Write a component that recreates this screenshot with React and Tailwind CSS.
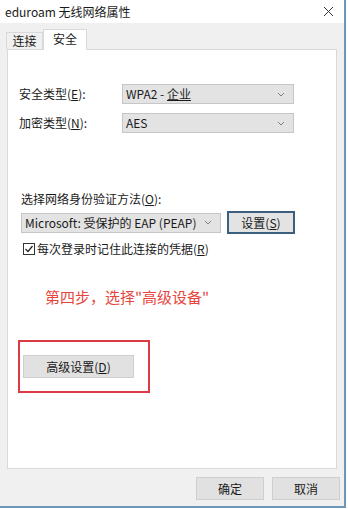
import React from "react";

const font = { fontFamily: '"Microsoft YaHei", "Noto Sans CJK SC", "Noto Sans", sans-serif' };

function Chevron() {
    return (
        <svg width="8" height="5" viewBox="0 0 8 5" className="text-[#808080]">
            <path d="M1 1 L4 4 L7 1" fill="none" stroke="currentColor" strokeWidth="1" />
        </svg>
    );
}

function Select({ children, className }) {
    return (
        <div className={`flex items-center justify-between h-[20px] bg-[#e3e3e3] border border-[#c6c6c6] pl-[3px] pr-[8px] ${className}`}>
            <span className="text-[12px] text-[#1a1a1a] leading-none">{children}</span>
            <Chevron />
        </div>
    );
}

export default function App() {
    return (
        <div className="w-[348px] h-[509px] bg-white text-[#1a1a1a] overflow-hidden" style={font}>
            <div className="w-[346px] h-[508px] border-r-2 border-b-2 border-[#6e96b6] bg-[#f0f0f0] flex flex-col">
                {/* Title bar */}
                <div className="h-[23px] bg-white flex items-center justify-between pl-[5px] pr-[10px]">
                    <span className="text-[12px] leading-none">eduroam 无线网络属性</span>
                    <svg width="11" height="11" viewBox="0 0 11 11">
                        <path d="M1 1 L10 10 M10 1 L1 10" stroke="#333" strokeWidth="1" />
                    </svg>
                </div>

                {/* Tabs */}
                <div className="flex items-end h-[26px] pl-[6px] pt-[5px]">
                    <div className="h-[17px] w-[37px] border border-b-0 border-[#d9d9d9] bg-[#f0f0f0] flex items-center justify-center text-[12px] leading-none">连接</div>
                    <div className="h-[21px] w-[44px] border border-b-0 border-[#d9d9d9] bg-white flex items-start pt-[3px] justify-center text-[12px] leading-none -mb-px relative z-10">安全</div>
                </div>

                {/* Panel */}
                <div className="mx-[7px] h-[420px] bg-white border border-[#d9d9d9] flex flex-col">
                    <div className="h-[34px]" />
                    <div className="flex items-center h-[20px]">
                        <span className="w-[114px] pl-[11px] text-[12px]">安全类型(<span className="underline">E</span>):</span>
                        <Select className="w-[172px]">WPA2 - <span className="underline">企业</span></Select>
                    </div>
                    <div className="h-[9px]" />
                    <div className="flex items-center h-[20px]">
                        <span className="w-[114px] pl-[11px] text-[12px]">加密类型(<span className="underline">N</span>):</span>
                        <Select className="w-[172px]">AES</Select>
                    </div>

                    <div className="h-[60px]" />
                    <div className="pl-[13px] text-[12px] leading-none">选择网络身份验证方法(<span className="underline">O</span>):</div>
                    <div className="flex items-center mt-[6px] pl-[13px] gap-[6px]">
                        <Select className="w-[200px]">Microsoft: 受保护的 EAP (PEAP)</Select>
                        <div className="w-[68px] h-[23px] border-2 border-[#3c5f80] bg-[#e3e3e3] flex items-center justify-center text-[12px]">
                            设置(<span className="underline">S</span>)
                        </div>
                    </div>
                    <div className="flex items-center mt-[6px] pl-[15px] gap-[2px]">
                        <div className="w-[12px] h-[12px] border border-[#333] bg-white flex items-center justify-center">
                            <svg width="10" height="10" viewBox="0 0 10 10">
                                <path d="M1.5 5 L4 7.5 L8.5 2" fill="none" stroke="#222" strokeWidth="1.2" />
                            </svg>
                        </div>
                        <span className="text-[12px]">每次登录时记住此连接的凭据(<span className="underline">R</span>)</span>
                    </div>

                    <div className="pl-[37px] mt-[31px] text-[15px] leading-none text-[#e5463e]">第四步，选择"高级设备"</div>

                    <div className="ml-[10px] mt-[36px] w-[132px] h-[53px] border-2 border-[#dc3a44] pt-[13px] pl-[3px]">
                        <div className="w-[111px] h-[23px] bg-[#e1e1e1] border border-[#cfcfcf] flex items-center justify-center text-[12px]">
                            高级设置(<span className="underline">D</span>)
                        </div>
                    </div>
                </div>

                {/* Footer buttons */}
                <div className="flex justify-end gap-[8px] pr-[4px] mt-[8px]">
                    <div className="w-[68px] h-[23px] bg-[#e1e1e1] border border-[#cfcfcf] flex items-center justify-center text-[12px]">确定</div>
                    <div className="w-[68px] h-[23px] bg-[#e1e1e1] border border-[#cfcfcf] flex items-center justify-center text-[12px]">取消</div>
                </div>
            </div>
        </div>
    );
}
